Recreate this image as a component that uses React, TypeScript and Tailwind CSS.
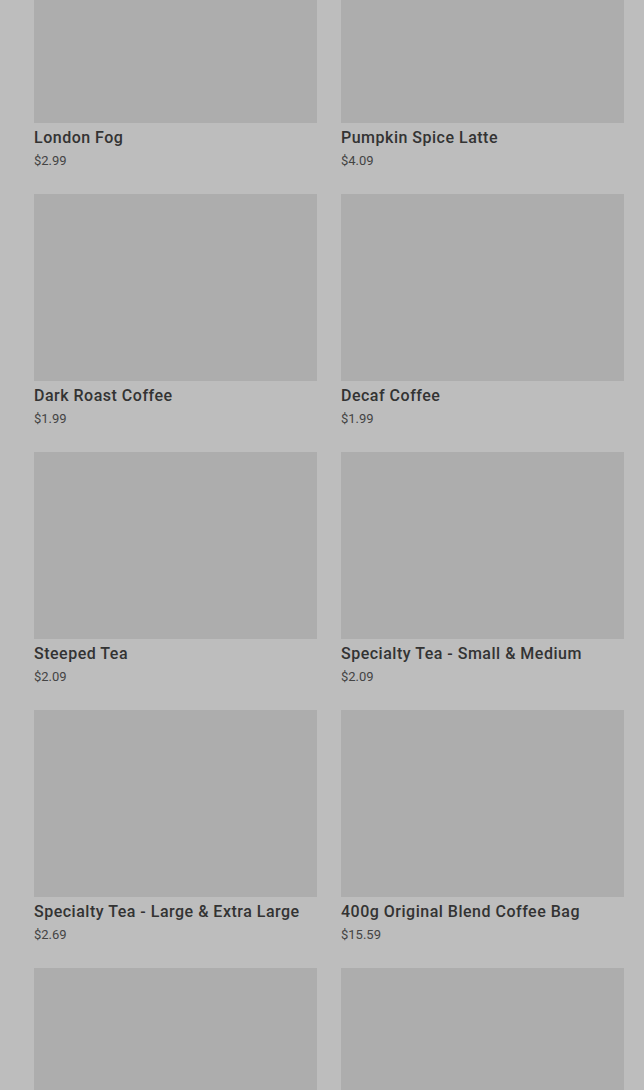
import React from "react";

interface Product {
  name: string;
  price: string;
}

const PRODUCTS: Product[] = [
  { name: "London Fog", price: "$2.99" },
  { name: "Pumpkin Spice Latte", price: "$4.09" },
  { name: "Dark Roast Coffee", price: "$1.99" },
  { name: "Decaf Coffee", price: "$1.99" },
  { name: "Steeped Tea", price: "$2.09" },
  { name: "Specialty Tea - Small & Medium", price: "$2.09" },
  { name: "Specialty Tea - Large & Extra Large", price: "$2.69" },
  { name: "400g Original Blend Coffee Bag", price: "$15.59" },
  { name: "", price: "" },
  { name: "", price: "" },
];

export default function App() {
  return (
    <div
      className="w-full h-[1090px] overflow-hidden bg-[#bdbdbd]"
      style={{ fontFamily: "Roboto, 'Noto Sans', sans-serif" }}
    >
      <div className="mt-[-64px] ml-[34px] mr-[20px] grid grid-cols-2 gap-x-[24px] gap-y-[24px]">
        {PRODUCTS.map((p, i) => (
          <div key={i} className="flex flex-col">
            <div className="h-[187px] bg-[#adadad]" />
            {p.name && (
              <>
                <p className="mt-[5px] text-[16px] leading-[20px] font-medium text-[#333333] tracking-[0.5px]">
                  {p.name}
                </p>
                <p className="mt-[4px] text-[13px] leading-[18px] text-[#444444] tracking-[0px]">
                  {p.price}
                </p>
              </>
            )}
          </div>
        ))}
      </div>
    </div>
  );
}
